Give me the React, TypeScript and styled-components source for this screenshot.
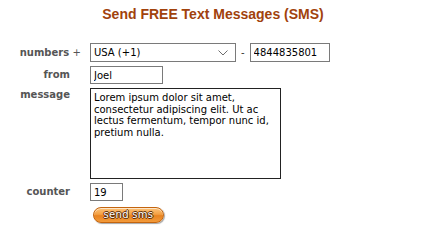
import styled, { createGlobalStyle } from 'styled-components';

const GlobalStyle = createGlobalStyle`
  html, body {
    margin: 0;
    padding: 0;
    background: #ffffff;
  }
  body {
    font-family: 'DejaVu Sans', Verdana, sans-serif;
  }
`;

const Page = styled.div`
  width: 426px;
  height: 230px;
  overflow: hidden;
`;

const Title = styled.h1`
  margin: 0;
  padding-top: 6px;
  height: 43px;
  box-sizing: border-box;
  text-align: center;
  font-family: 'Liberation Sans', Arial, sans-serif;
  font-size: 14px;
  line-height: 16px;
  font-weight: bold;
  color: #a1420c;
`;

const Form = styled.form`
  display: grid;
  grid-template-columns: 84px auto;
  column-gap: 6px;
  row-gap: 4px;
  align-items: center;
  justify-items: start;
`;

const Label = styled.label<{ top?: boolean }>`
  justify-self: stretch;
  align-self: ${({ top }) => (top ? 'start' : 'center')};
  padding-top: ${({ top }) => (top ? '1px' : '0')};
  padding-right: 14px;
  text-align: right;
  font-size: 10px;
  line-height: 12px;
  font-weight: bold;
  color: #555555;
`;

const Plus = styled.span`
  font-weight: normal;
  color: #555555;
  margin-right: -11px;
`;

const NumberRow = styled.div`
  display: flex;
  align-items: center;
  gap: 5px;
  font-size: 10px;
  color: #333;
`;

const SelectWrap = styled.div`
  position: relative;
  display: flex;
`;

const Select = styled.select`
  appearance: none;
  width: 146px;
  height: 19px;
  box-sizing: border-box;
  margin: 0;
  padding: 0 0 0 3px;
  border: 1px solid #7a7a7a;
  border-radius: 0;
  background: #ffffff;
  font-family: 'DejaVu Sans', Verdana, sans-serif;
  font-size: 10px;
  color: #000;
`;

const Chevron = styled.svg`
  position: absolute;
  right: 8px;
  top: 7px;
  pointer-events: none;
`;

const Input = styled.input<{ w: number }>`
  width: ${({ w }) => w}px;
  height: 18px;
  box-sizing: border-box;
  margin: 0;
  padding: 0 3px;
  border: 1px solid #7a7a7a;
  border-radius: 0;
  font-family: 'DejaVu Sans', Verdana, sans-serif;
  font-size: 10px;
  color: #000;
  outline: none;
`;

const PhoneInput = styled(Input)`
  height: 19px;
`;

const Message = styled.textarea`
  width: 191px;
  height: 91px;
  box-sizing: border-box;
  margin: 0;
  padding: 3px 3px;
  border: 1px solid #222222;
  resize: none;
  font-family: 'DejaVu Sans', Verdana, sans-serif;
  font-size: 10px;
  line-height: 11.5px;
  color: #000;
  outline: none;
`;

const SendButton = styled.button`
  grid-column: 2;
  margin: 2px 0 0 3px;
  width: 71px;
  height: 16px;
  padding: 0;
  border: 1px solid #c4650f;
  border-radius: 8px;
  background: linear-gradient(#fcc47c 0%, #f4a043 45%, #e88320 55%, #f39b3b 100%);
  box-shadow: 1px 1px 1px rgba(0, 0, 0, 0.35), inset 0 1px 0 rgba(255, 255, 255, 0.6);
  font-family: 'DejaVu Sans', Verdana, sans-serif;
  font-size: 10px;
  line-height: 14px;
  letter-spacing: 0.3px;
  color: #ffffff;
  text-shadow: -1px 0 #5a2a05, 1px 0 #5a2a05, 0 -1px #5a2a05, 0 1px #5a2a05;
  cursor: pointer;
`;

export default function App() {
  return (
    <Page>
      <GlobalStyle />
      <Title>Send FREE Text Messages (SMS)</Title>
      <Form onSubmit={(e) => e.preventDefault()}>
        <Label>
          numbers <Plus>+</Plus>
        </Label>
        <NumberRow>
          <SelectWrap>
            <Select defaultValue="1">
              <option value="1">USA (+1)</option>
              <option value="44">UK (+44)</option>
            </Select>
            <Chevron width="10" height="6" viewBox="0 0 10 6">
              <path d="M0.5 0.5 L5 5 L9.5 0.5" fill="none" stroke="#6d6d6d" strokeWidth="1" />
            </Chevron>
          </SelectWrap>
          <span>-</span>
          <PhoneInput w={80} defaultValue="4844835801" />
        </NumberRow>
        <Label>from</Label>
        <Input w={73} defaultValue="Joel" />
        <Label top>message</Label>
        <Message defaultValue="Lorem ipsum dolor sit amet, consectetur adipiscing elit. Ut ac lectus fermentum, tempor nunc id, pretium nulla." />
        <Label>counter</Label>
        <Input w={33} defaultValue="19" />
        <SendButton type="submit">send sms</SendButton>
      </Form>
    </Page>
  );
}
